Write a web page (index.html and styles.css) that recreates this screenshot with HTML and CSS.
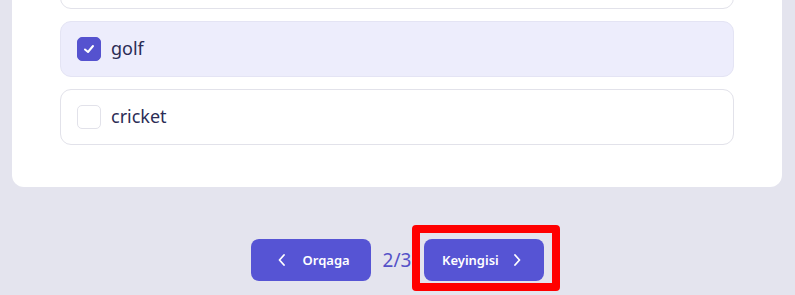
FILE: index.html
```html
<!DOCTYPE html>
<html lang="en">
<head>
  <meta charset="UTF-8">
  <meta name="viewport" content="width=device-width, initial-scale=1.0">
  <title>Savol 2/3</title>
  <link rel="stylesheet" href="styles.css">
</head>
<body>
  <div class="page">
    <div class="card">
      <div class="option"></div>
      <label class="option checked">
        <span class="box">
          <svg width="14" height="14" viewBox="0 0 14 14"><polyline points="3,7.5 6,10 11,4" fill="none" stroke="#fff" stroke-width="2" stroke-linecap="round" stroke-linejoin="round"/></svg>
        </span>
        <span class="label">golf</span>
      </label>
      <label class="option">
        <span class="box"></span>
        <span class="label">cricket</span>
      </label>
    </div>

    <div class="pager">
      <button class="nav-btn prev">
        <svg width="12" height="12" viewBox="0 0 12 12"><polyline points="8,1 3.5,6 8,11" fill="none" stroke="#fff" stroke-width="1.8" stroke-linecap="round" stroke-linejoin="round"/></svg>
        <span>Orqaga</span>
      </button>
      <span class="count">2/3</span>
      <div class="next-wrap">
        <button class="nav-btn next">
          <span>Keyingisi</span>
          <svg width="12" height="12" viewBox="0 0 12 12"><polyline points="4,1 8.5,6 4,11" fill="none" stroke="#fff" stroke-width="1.8" stroke-linecap="round" stroke-linejoin="round"/></svg>
        </button>
        <span class="highlight"></span>
      </div>
    </div>
  </div>
</body>
</html>
```

FILE: styles.css
```css
body {
  margin: 0;
  background: #e4e4ee;
  font-family: "Noto Sans", "Open Sans", sans-serif;
  color: #2b2c55;
}
.page {
  padding: 0 13px 14px 12px;
}
.card {
  margin-top: -71px;
  background: #fff;
  border-radius: 12px;
  padding: 24px 48px 42px;
  display: flex;
  flex-direction: column;
  gap: 12px;
}
.option {
  height: 56px;
  box-sizing: border-box;
  border: 1px solid #e2e2ea;
  border-radius: 11px;
  padding: 0 16px;
  display: flex;
  align-items: center;
  gap: 10px;
  background: #fff;
}
.option.checked {
  background: #ededfc;
  border-color: #e4e4f4;
}
.box {
  width: 24px;
  height: 24px;
  box-sizing: border-box;
  border: 1px solid #e2e2ea;
  border-radius: 5px;
  display: flex;
  align-items: center;
  justify-content: center;
}
.checked .box {
  background: #5552cf;
  border-color: #5552cf;
}
.label {
  font-size: 18px;
  line-height: 24px;
  margin-top: -2px;
}
.pager {
  margin-top: 52px;
  display: flex;
  justify-content: center;
  align-items: center;
  padding-left: 1px;
}
.nav-btn {
  width: 120px;
  height: 42px;
  border: none;
  border-radius: 8px;
  background: #5654d4;
  color: #fff;
  font-family: "Noto Sans", "Open Sans", sans-serif;
  font-size: 13px;
  font-weight: 600;
  display: flex;
  align-items: center;
  justify-content: center;
  gap: 15px;
  padding: 0;
}
.nav-btn.prev {
  padding-left: 4px;
}
.nav-btn.next {
  gap: 12px;
  padding-right: 4px;
}
.count {
  margin: 0 13px 0 12px;
  font-size: 19px;
  color: #5552c8;
}
.next-wrap {
  position: relative;
}
.highlight {
  position: absolute;
  top: -14px;
  left: -12px;
  right: -16px;
  bottom: -10px;
  border: 8px solid #ff0000;
  border-radius: 4px;
}
```
